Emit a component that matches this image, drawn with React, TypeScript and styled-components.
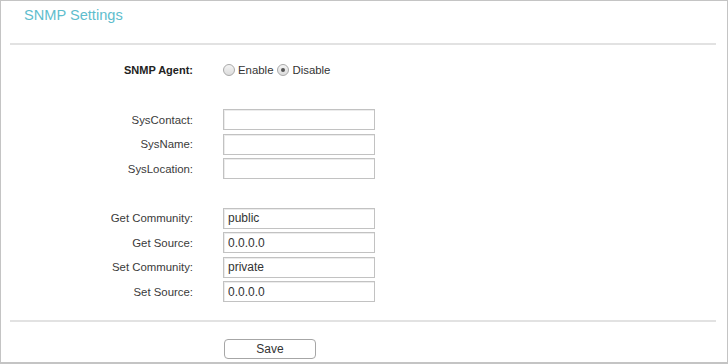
import React from 'react'
import styled, { createGlobalStyle } from 'styled-components'

const GlobalStyle = createGlobalStyle`
  html, body {
    margin: 0;
    padding: 0;
    background: #ffffff;
  }
  body {
    font-family: "Liberation Sans", Arial, sans-serif;
    font-size: 12px;
    color: #333333;
  }
`

const Frame = styled.div`
  box-sizing: border-box;
  width: 728px;
  height: 364px;
  border: 1px solid #c4c4c4;
  border-bottom-width: 2px;
  display: flex;
  flex-direction: column;
  background: #ffffff;
`

const Header = styled.div`
  height: 42px;
  box-sizing: border-box;
  padding: 5px 0 0 23px;
`

const Title = styled.h1`
  margin: 0;
  font-size: 14.6px;
  line-height: 18px;
  font-weight: normal;
  color: #5ebdcd;
`

const Divider = styled.div`
  height: 2px;
  margin: 0 11px 0 9px;
  background: #e2e2e2;
`

const Form = styled.div`
  display: flex;
  flex-direction: column;
  gap: 28.5px;
  padding: 14.5px 0 17.5px;
`

const Section = styled.div`
  display: flex;
  flex-direction: column;
  gap: 3.5px;
`

const Row = styled.div`
  display: grid;
  grid-template-columns: 192px 152px;
  column-gap: 30px;
  align-items: center;
  height: 21px;
`

const Label = styled.label<{ $bold?: boolean }>`
  text-align: right;
  font-size: ${(p) => (p.$bold ? '11px' : '11.4px')};
  font-weight: ${(p) => (p.$bold ? 'bold' : 'normal')};
  color: ${(p) => (p.$bold ? '#222222' : '#3a3a3a')};
  white-space: nowrap;
`

const TextInput = styled.input`
  box-sizing: border-box;
  width: 152px;
  height: 21px;
  margin: 0;
  padding: 0 4px;
  border: 1px solid #c2c2c2;
  box-shadow: inset 1px 1px 0 #ececec;
  font-family: "Liberation Sans", Arial, sans-serif;
  font-size: 12px;
  color: #333333;
  outline: none;
`

const RadioGroup = styled.div`
  display: flex;
  align-items: center;
`

const RadioOption = styled.span`
  display: inline-flex;
  align-items: center;
  gap: 3px;
  margin-right: 4px;
  font-size: 11.4px;
  color: #333333;
`

const RadioDot = styled.span<{ $checked?: boolean }>`
  box-sizing: border-box;
  width: 12px;
  height: 12px;
  border-radius: 50%;
  border: 1px solid #a9a9a9;
  background: linear-gradient(#f4f4f4, #dcdcdc);
  display: inline-flex;
  align-items: center;
  justify-content: center;

  &::after {
    content: '';
    display: ${(p) => (p.$checked ? 'block' : 'none')};
    width: 4px;
    height: 4px;
    border-radius: 50%;
    background: #555555;
  }
`

const Footer = styled.div`
  padding: 17px 0 0 223px;
`

const SaveButton = styled.button`
  box-sizing: border-box;
  width: 92px;
  height: 20px;
  margin: 0;
  padding: 0;
  border: 1px solid #a6a6a6;
  border-radius: 4px;
  background: #ffffff;
  font-family: "Liberation Sans", Arial, sans-serif;
  font-size: 12px;
  color: #333333;
  cursor: pointer;
`

type Field = { label: string; value: string }

const sysFields: Field[] = [
  { label: 'SysContact:', value: '' },
  { label: 'SysName:', value: '' },
  { label: 'SysLocation:', value: '' },
]

const communityFields: Field[] = [
  { label: 'Get Community:', value: 'public' },
  { label: 'Get Source:', value: '0.0.0.0' },
  { label: 'Set Community:', value: 'private' },
  { label: 'Set Source:', value: '0.0.0.0' },
]

function FieldRows({ fields }: { fields: Field[] }) {
  return (
    <Section>
      {fields.map((f) => (
        <Row key={f.label}>
          <Label>{f.label}</Label>
          <TextInput type="text" defaultValue={f.value} />
        </Row>
      ))}
    </Section>
  )
}

export default function App() {
  return (
    <>
      <GlobalStyle />
      <Frame>
        <Header>
          <Title>SNMP Settings</Title>
        </Header>
        <Divider />
        <Form>
          <Section>
            <Row>
              <Label $bold>SNMP Agent:</Label>
              <RadioGroup>
                <RadioOption>
                  <RadioDot />
                  Enable
                </RadioOption>
                <RadioOption>
                  <RadioDot $checked />
                  Disable
                </RadioOption>
              </RadioGroup>
            </Row>
          </Section>
          <FieldRows fields={sysFields} />
          <FieldRows fields={communityFields} />
        </Form>
        <Divider />
        <Footer>
          <SaveButton>Save</SaveButton>
        </Footer>
      </Frame>
    </>
  )
}
